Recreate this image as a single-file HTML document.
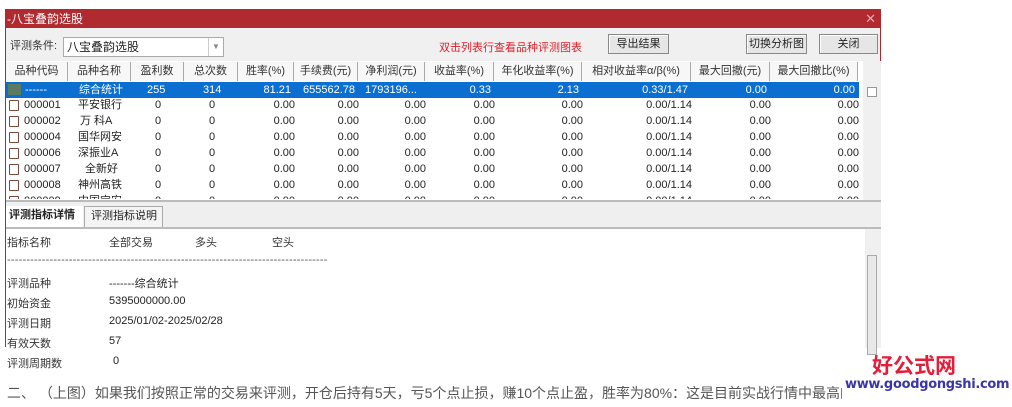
<!DOCTYPE html>
<html><head><meta charset="utf-8"><style>
*{margin:0;padding:0;box-sizing:border-box}
body{width:1012px;height:407px;background:#fff;font-family:"Liberation Sans","Noto Sans CJK SC",sans-serif;font-size:11px;color:#222;position:relative;overflow:hidden}
.a{position:absolute;white-space:nowrap}
.win{position:absolute;left:5px;top:9px;width:876px;height:338px;background:#f0f0f0;border:1px solid #b0282e;border-bottom:none}
.title{position:absolute;left:0;top:0;width:100%;height:18px;background:#b02a2f;color:#fff;font-size:12px;line-height:18px;padding-left:1px}
.btn{position:absolute;height:20px;border:1px solid #888;background:#e6e6e6;text-align:center;line-height:18px;font-size:11px;box-shadow:inset 1px 1px #fff}
.list{position:absolute;left:0;top:51px;width:875px;height:139px;background:#fff;overflow:hidden}
.hd{position:absolute;top:1px;height:19px;line-height:19px;text-align:center;border-right:1px solid #aaa;background:#f7f7f7;color:#333}
.row{position:absolute;left:0;height:16px;line-height:16px;width:853px}
.c{position:absolute;top:0;height:16px}
.r{text-align:right}
.ic{position:absolute;left:4px;top:3px;width:10px;height:11px;border:1px solid #7a4a3a;border-radius:1px}
</style></head><body>
<div class="win">
<div class="title">-八宝叠韵选股<span style="position:absolute;right:4px;top:0;color:#e9aaaa;font-size:13px">✕</span></div>
<div class="a" style="left:4px;top:27px;font-size:11px;color:#333">评测条件:</div>
<div class="a" style="left:57px;top:27px;width:161px;height:20px;background:#fff;border:1px solid #aaa;font-size:12px;line-height:18px;padding-left:3px">八宝叠韵选股<span style="position:absolute;right:0;top:0;width:15px;height:18px;border-left:1px solid #ccc;color:#888;font-size:8px;text-align:center">▼</span></div>
<div class="a" style="left:433px;top:29px;color:#e0202a;font-size:11px">双击列表行查看品种评测图表</div>
<div class="btn" style="left:602px;top:24px;width:61px">导出结果</div>
<div class="btn" style="left:740px;top:24px;width:61px">切换分析图</div>
<div class="btn" style="left:813px;top:24px;width:59px">关闭</div>
<div class="list">
<div class="hd" style="left:0;width:62px">品种代码</div>
<div class="hd" style="left:62px;width:63px">品种名称</div>
<div class="hd" style="left:125px;width:53px">盈利数</div>
<div class="hd" style="left:178px;width:54px">总次数</div>
<div class="hd" style="left:232px;width:56px">胜率(%)</div>
<div class="hd" style="left:288px;width:64px">手续费(元)</div>
<div class="hd" style="left:352px;width:67px">净利润(元)</div>
<div class="hd" style="left:419px;width:69px">收益率(%)</div>
<div class="hd" style="left:488px;width:88px">年化收益率(%)</div>
<div class="hd" style="left:576px;width:109px">相对收益率α/β(%)</div>
<div class="hd" style="left:685px;width:79px">最大回撤(元)</div>
<div class="hd" style="left:764px;width:88px">最大回撤比(%)</div>
<div class="a" style="left:857px;top:0;width:18px;height:139px;background:#f0f0f0"></div>
<div class="a" style="left:861px;top:26px;width:10px;height:10px;border:1px solid #999;background:#fff"></div>
<div class="row" style="top:21px;background:#0a6fd0;color:#fff"><div class="a" style="left:2px;top:2px;width:13px;height:11px;background:#5b7a5f"></div>
<div class="c" style="left:19px">------</div><div class="c" style="left:73px">综合统计</div><div class="c" style="left:141px">255</div><div class="c" style="left:197px">314</div>
<div class="c r" style="left:232px;width:53px">81.21</div><div class="c r" style="left:288px;width:61px">655562.78</div><div class="c" style="left:359px">1793196...</div><div class="c r" style="left:419px;width:66px">0.33</div><div class="c r" style="left:488px;width:85px">2.13</div><div class="c r" style="left:576px;width:106px">0.33/1.47</div><div class="c r" style="left:685px;width:76px">0.00</div><div class="c r" style="left:764px;width:85px">0.00</div></div>
</div>
<div class="a" style="left:0;top:190px;width:875px;height:29px;background:#efefef;border-top:2px solid #bbb;border-bottom:2px solid #bbb"></div>
<div class="a" style="left:0;top:196px;width:77px;height:21px;line-height:19px;font-weight:bold;font-size:11px;padding-left:3px;background:#fff">评测指标详情</div>
<div class="a" style="left:78px;top:196px;width:79px;height:21px;line-height:19px;border:1px solid #aaa;border-bottom:none;font-size:11px;padding-left:6px;background:#f4f4f4">评测指标说明</div>
<div class="a" style="left:0;top:219px;width:875px;height:119px;background:#fff"></div>
<div class="a" style="left:859px;top:219px;width:16px;height:119px;background:#f0f0f0"></div>
<div class="a" style="left:861px;top:245px;width:10px;height:100px;background:#e8e8e8;border:1px solid #aaa"></div>
</div>
<div class="a" style="left:7px;top:234px;color:#333">指标名称</div>
<div class="a" style="left:109px;top:234px;color:#333">全部交易</div>
<div class="a" style="left:195px;top:234px;color:#333">多头</div>
<div class="a" style="left:272px;top:234px;color:#333">空头</div>
<div class="a" style="left:7px;top:254px;color:#555;letter-spacing:0.2px">-----------------------------------------------------------------------------------</div>
<div class="a" style="left:7px;top:275px;color:#333">评测品种</div><div class="a" style="left:109px;top:275px">-------综合统计</div>
<div class="a" style="left:7px;top:295px;color:#333">初始资金</div><div class="a" style="left:109px;top:295px">5395000000.00</div>
<div class="a" style="left:7px;top:315px;color:#333">评测日期</div><div class="a" style="left:109px;top:315px">2025/01/02-2025/02/28</div>
<div class="a" style="left:7px;top:335px;color:#333">有效天数</div><div class="a" style="left:109px;top:335px">57</div>
<div class="a" style="left:7px;top:355px;color:#333">评测周期数</div><div class="a" style="left:113px;top:355px">0</div>
<div class="a" style="left:7px;top:383px;color:#555;font-size:14px;width:835px;overflow:hidden">二、 （上图）如果我们按照正常的交易来评测，开仓后持有5天，亏5个点止损，赚10个点止盈，胜率为80%：这是目前实战行情中最高的胜</div>
<div class="a" style="left:872px;top:350px;color:#e41d3a;font-size:21px;font-weight:bold;font-family:'Noto Sans CJK SC',sans-serif">好公式网</div>
<div class="a" style="left:845px;top:377px;color:#3a35a8;font-size:13px;font-weight:bold;font-family:'DejaVu Sans',sans-serif;letter-spacing:-0.3px">www.goodgongshi.com</div>
<script>
var d=[["000001","平安银行",73],["000002","万 科A",75],["000004","国华网安",73],["000006","深振业A",73],["000007","全新好",80],["000008","神州高铁",73],["000009","中国宝安",73]];
var h="";
d.forEach(function(r,i){var t=81+16*(i+1);
h+='<div class="row" style="top:'+t+'px;left:5px"><div class="ic"></div><div class="c" style="left:19px">'+r[0]+'</div><div class="c" style="left:'+r[2]+'px">'+r[1]+'</div><div class="c" style="left:150px">0</div><div class="c" style="left:204px">0</div><div class="c r" style="left:237px;width:53px">0.00</div><div class="c r" style="left:293px;width:61px">0.00</div><div class="c r" style="left:357px;width:64px">0.00</div><div class="c r" style="left:424px;width:66px">0.00</div><div class="c r" style="left:493px;width:85px">0.00</div><div class="c r" style="left:581px;width:106px">0.00/1.14</div><div class="c r" style="left:690px;width:76px">0.00</div><div class="c r" style="left:769px;width:85px">0.00</div></div>';});
var w=document.createElement("div");w.style.cssText="position:absolute;left:0;top:0;width:1012px;height:199px;overflow:hidden;pointer-events:none";w.innerHTML=h;document.body.insertBefore(w,document.body.children[1]);
</script>
</body></html>
